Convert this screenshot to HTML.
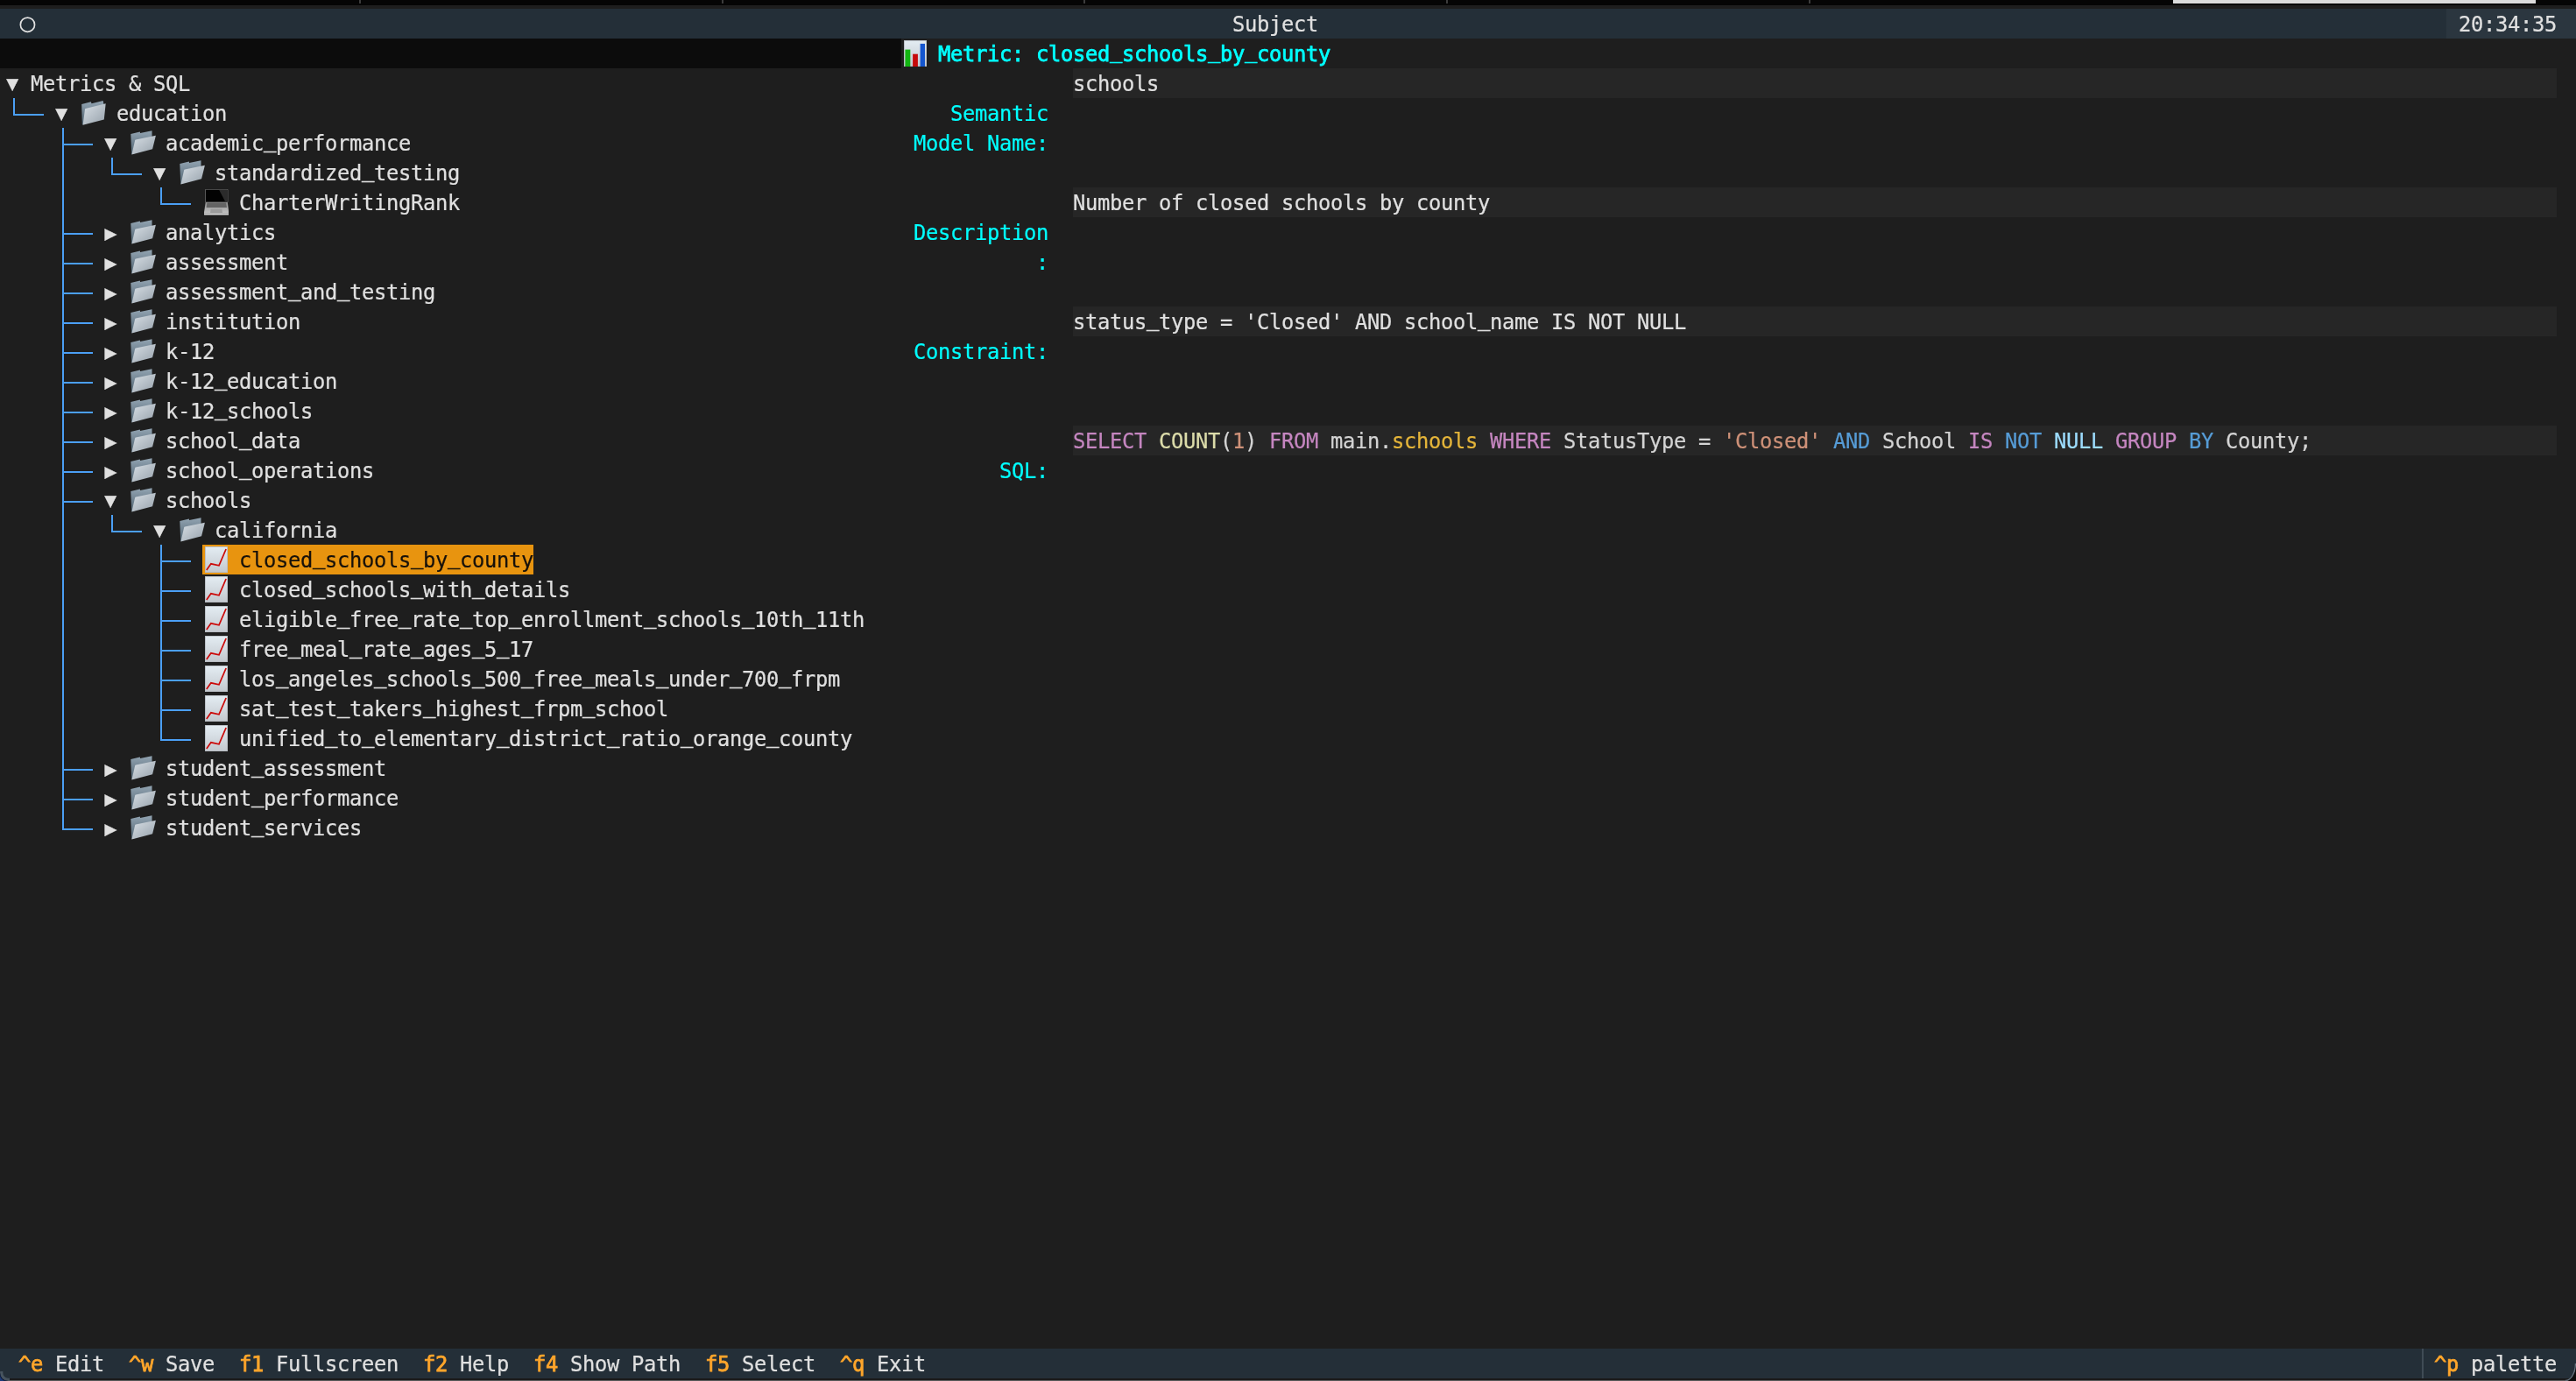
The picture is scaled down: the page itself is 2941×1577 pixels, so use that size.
<!DOCTYPE html>
<html lang="en"><head><meta charset="utf-8"><title>Subject</title>
<style>
html,body{margin:0;padding:0;background:#1e1e1e;}
body{width:2941px;height:1577px;overflow:hidden;position:relative;
font-family:"DejaVu Sans Mono","Liberation Mono",monospace;font-size:24.5px;color:#e0e0e0;}
#s{position:absolute;left:0;top:0;width:2941px;height:1577px;overflow:hidden;will-change:transform;}
#s>div,#s>span,#s>svg{position:absolute;}
.t{white-space:pre;line-height:34px;height:34px;letter-spacing:-0.3172px;margin-top:1px;margin-left:0.2px;transform:scaleX(0.97);transform-origin:0 0;-webkit-text-stroke:0.22px currentColor;}
.b{-webkit-text-stroke:0.75px currentColor;}
.a{letter-spacing:0;width:14px;text-align:center;transform:none;margin-left:0.1px;margin-top:0.4px;font-size:23px;}
.right{margin-left:0.4px;margin-top:0.6px;}
.i{display:block;overflow:visible;}
i{font-style:normal;position:relative;top:-4.4px;-webkit-text-stroke:0.55px currentColor;}
</style></head>
<body>
<svg width="0" height="0" style="position:absolute">
<defs>
<linearGradient id="gf" x1="0" y1="0" x2="1" y2="1"><stop offset="0" stop-color="#d9e0e6"/><stop offset="1" stop-color="#96a1ab"/></linearGradient>
<linearGradient id="gb" x1="0" y1="0" x2="0" y2="1"><stop offset="0" stop-color="#93a5b3"/><stop offset="1" stop-color="#4e616f"/></linearGradient>
<linearGradient id="gp" x1="0" y1="0" x2="0" y2="1"><stop offset="0" stop-color="#e4edf3"/><stop offset="1" stop-color="#c3c8ce"/></linearGradient>
<linearGradient id="gl" x1="0" y1="0" x2="0" y2="1"><stop offset="0" stop-color="#8e8e8e"/><stop offset="1" stop-color="#c4c4c4"/></linearGradient>
<symbol id="fopen" viewBox="0 0 30 28">
<path d="M0.3 3.9 L10.8 1.4 L11.1 3 L24.5 0.2 L24.6 20 L1.2 27.2 Z" fill="url(#gb)"/>
<path d="M6 10.6 Q5.3 10.8 5.1 11.6 L1.4 27.5 L25.1 21.2 L28.9 5.8 Z" fill="url(#gf)"/>
</symbol>
<symbol id="fclosed" viewBox="0 0 29 28">
<path d="M0.2 4 L10.9 1.3 L11.5 3.2 L24.7 0.1 L25.4 3.8 L25 20 L1.4 27.4 L0.8 27 Z" fill="url(#gb)"/>
<path d="M4.6 8.9 Q4.1 9 4 9.8 L1.6 27.7 L25.8 21.6 L27.7 3.2 Z" fill="url(#gf)"/>
</symbol>
<symbol id="laptop" viewBox="0 0 28 30">
<path d="M1.5 0.3 L27 0.3 L27 14.9 L1.5 14.9 Z" fill="#020202" stroke="#777" stroke-width="0.7"/>
<path d="M17.2 0.9 L26.5 0.9 L26.5 14 L24.3 14.4 Z" fill="#2b2b2b"/>
<path d="M1.7 14.9 L26.8 14.9 L28.4 27.8 L-0.2 27.8 Z" fill="url(#gl)"/>
<path d="M3.4 15.6 L25.1 15.6 L26 21 L2.6 21 Z" fill="#636363"/>
<path d="M7.6 22.4 L20.4 22.4 L21 27.6 L7 27.6 Z" fill="#9c9c9c"/>
<path d="M-0.2 27.8 L28.4 27.8 L28 29.6 L0.2 29.6 Z" fill="#d8d8d8"/>
</symbol>
<symbol id="chart" viewBox="0 0 26 30">
<rect x="0" y="0" width="26" height="30" fill="url(#gp)"/>
<rect x="0.4" y="0.4" width="25.2" height="29.2" fill="none" stroke="#b4bac0" stroke-width="0.8"/>
<path d="M1.8 26.9 L6.9 19.8 L16 21.8 L24.1 3" fill="none" stroke="#cc0a0a" stroke-width="1.7" stroke-linejoin="miter"/>
</symbol>
<symbol id="bars" viewBox="0 0 26 30">
<rect x="0" y="0" width="26" height="30" fill="url(#gp)"/>
<rect x="0.4" y="0.4" width="25.2" height="29.2" fill="none" stroke="#b4bac0" stroke-width="0.8"/>
<rect x="1.4" y="10.6" width="5.9" height="19.4" fill="#12b512"/>
<rect x="10.1" y="15.7" width="5.8" height="14.3" fill="#c70a0a"/>
<rect x="18.6" y="3.9" width="5.4" height="26.1" fill="#1556cf"/>
</symbol>
</defs>
</svg>
<div id="s">
<div style="left:0px;top:0px;width:2941px;height:6px;background:#050505;"></div>
<div style="left:410px;top:0px;width:2px;height:4px;background:#3c3c3c;"></div>
<div style="left:824px;top:0px;width:2px;height:4px;background:#3c3c3c;"></div>
<div style="left:1237px;top:0px;width:2px;height:4px;background:#3c3c3c;"></div>
<div style="left:1651px;top:0px;width:2px;height:4px;background:#3c3c3c;"></div>
<div style="left:2065px;top:0px;width:2px;height:4px;background:#3c3c3c;"></div>
<div style="left:2481px;top:0px;width:414px;height:4px;background:#dcdcdc;"></div>
<div style="left:0px;top:6px;width:2941px;height:4px;background:#1e1e1e;"></div>
<div style="left:0px;top:10px;width:2941px;height:34px;background:#242f38;"></div>
<div style="left:2793px;top:10px;width:148px;height:34px;background:#2b363f;"></div>
<div style="left:0px;top:44px;width:1029px;height:34px;background:#0c0c0c;"></div>
<div style="left:0px;top:1540px;width:2941px;height:34px;background:#242f38;"></div>
<div style="left:0px;top:1574px;width:2941px;height:3px;background:#1b1b1b;"></div>
<div style="left:0px;top:1576px;width:2941px;height:1px;background:#5a5a5a;"></div>
<svg class="i" style="left:20px;top:16px" width="24" height="24" viewBox="0 0 24 24"><circle cx="11.45" cy="12.2" r="8.1" fill="none" stroke="#e0e0e0" stroke-width="1.7"/></svg>
<span class="t" style="left:1407px;top:10px;">Subject</span>
<span class="t" style="left:2807px;top:10px;">20:34:35</span>
<svg class="i" style="left:1032px;top:46px" width="26" height="30" viewBox="0 0 26 30"><use href="#bars"/></svg>
<span class="t b" style="left:1071px;top:44px;color:#00ffff;">Metric: closed<i>_</i>schools<i>_</i>by<i>_</i>county</span>
<div style="left:1225px;top:78px;width:1694px;height:34px;background:#262626;"></div>
<span class="t" style="left:1225px;top:78px;">schools</span>
<span class="t" style="left:1085px;top:112px;color:#00ffff;">Semantic</span>
<span class="t" style="left:1043px;top:146px;color:#00ffff;">Model Name:</span>
<div style="left:1225px;top:214px;width:1694px;height:34px;background:#262626;"></div>
<span class="t" style="left:1225px;top:214px;">Number of closed schools by county</span>
<span class="t" style="left:1043px;top:248px;color:#00ffff;">Description</span>
<span class="t" style="left:1183px;top:282px;color:#00ffff;">:</span>
<div style="left:1225px;top:350px;width:1694px;height:34px;background:#262626;"></div>
<span class="t" style="left:1225px;top:350px;">status<i>_</i>type = &#x27;Closed&#x27; AND school<i>_</i>name IS NOT NULL</span>
<span class="t" style="left:1043px;top:384px;color:#00ffff;">Constraint:</span>
<div style="left:1225px;top:486px;width:1694px;height:34px;background:#262626;"></div>
<span class="t" style="left:1225px;top:486px;color:#c586c0;">SELECT</span>
<span class="t" style="left:1323px;top:486px;color:#dcdcaa;">COUNT</span>
<span class="t" style="left:1393px;top:486px;color:#d4d4d4;">(</span>
<span class="t" style="left:1407px;top:486px;color:#ce9178;">1</span>
<span class="t" style="left:1421px;top:486px;color:#d4d4d4;">)</span>
<span class="t" style="left:1449px;top:486px;color:#c586c0;">FROM</span>
<span class="t" style="left:1519px;top:486px;color:#d4d4d4;">main.</span>
<span class="t" style="left:1589px;top:486px;color:#e5b53a;">schools</span>
<span class="t" style="left:1701px;top:486px;color:#c586c0;">WHERE</span>
<span class="t" style="left:1785px;top:486px;color:#d4d4d4;">StatusType =</span>
<span class="t" style="left:1967px;top:486px;color:#ce9178;">&#x27;Closed&#x27;</span>
<span class="t" style="left:2093px;top:486px;color:#569cd6;">AND</span>
<span class="t" style="left:2149px;top:486px;color:#d4d4d4;">School</span>
<span class="t" style="left:2247px;top:486px;color:#c586c0;">IS</span>
<span class="t" style="left:2289px;top:486px;color:#569cd6;">NOT</span>
<span class="t" style="left:2345px;top:486px;color:#9cdcfe;">NULL</span>
<span class="t" style="left:2415px;top:486px;color:#c586c0;">GROUP</span>
<span class="t" style="left:2499px;top:486px;color:#569cd6;">BY</span>
<span class="t" style="left:2541px;top:486px;color:#d4d4d4;">County;</span>
<span class="t" style="left:1141px;top:520px;color:#00ffff;">SQL:</span>
<span class="t a down" style="left:7px;top:78px">▼</span>
<span class="t" style="left:35px;top:78px;">Metrics &amp; SQL</span>
<div style="left:15px;top:112px;width:2px;height:20px;background:#4b9ff5;"></div>
<div style="left:15px;top:130px;width:35px;height:2px;background:#4b9ff5;"></div>
<span class="t a down" style="left:63px;top:112px">▼</span>
<svg class="i" style="left:93px;top:115px" width="29" height="28" viewBox="0 0 29 28"><use href="#fclosed"/></svg>
<span class="t" style="left:133px;top:112px;">education</span>
<div style="left:71px;top:146px;width:2px;height:34px;background:#4b9ff5;"></div>
<div style="left:71px;top:164px;width:35px;height:2px;background:#4b9ff5;"></div>
<span class="t a down" style="left:119px;top:146px">▼</span>
<svg class="i" style="left:149px;top:149px" width="30" height="28" viewBox="0 0 30 28"><use href="#fopen"/></svg>
<span class="t" style="left:189px;top:146px;">academic<i>_</i>performance</span>
<div style="left:71px;top:180px;width:2px;height:34px;background:#4b9ff5;"></div>
<div style="left:127px;top:180px;width:2px;height:20px;background:#4b9ff5;"></div>
<div style="left:127px;top:198px;width:35px;height:2px;background:#4b9ff5;"></div>
<span class="t a down" style="left:175px;top:180px">▼</span>
<svg class="i" style="left:205px;top:183px" width="30" height="28" viewBox="0 0 30 28"><use href="#fopen"/></svg>
<span class="t" style="left:245px;top:180px;">standardized<i>_</i>testing</span>
<div style="left:71px;top:214px;width:2px;height:34px;background:#4b9ff5;"></div>
<div style="left:183px;top:214px;width:2px;height:20px;background:#4b9ff5;"></div>
<div style="left:183px;top:232px;width:35px;height:2px;background:#4b9ff5;"></div>
<svg class="i" style="left:233px;top:216px" width="28" height="30" viewBox="0 0 28 30"><use href="#laptop"/></svg>
<span class="t" style="left:273px;top:214px;">CharterWritingRank</span>
<div style="left:71px;top:248px;width:2px;height:34px;background:#4b9ff5;"></div>
<div style="left:71px;top:266px;width:35px;height:2px;background:#4b9ff5;"></div>
<span class="t a right" style="left:119px;top:248px">▶</span>
<svg class="i" style="left:149px;top:251px" width="30" height="28" viewBox="0 0 30 28"><use href="#fopen"/></svg>
<span class="t" style="left:189px;top:248px;">analytics</span>
<div style="left:71px;top:282px;width:2px;height:34px;background:#4b9ff5;"></div>
<div style="left:71px;top:300px;width:35px;height:2px;background:#4b9ff5;"></div>
<span class="t a right" style="left:119px;top:282px">▶</span>
<svg class="i" style="left:149px;top:285px" width="30" height="28" viewBox="0 0 30 28"><use href="#fopen"/></svg>
<span class="t" style="left:189px;top:282px;">assessment</span>
<div style="left:71px;top:316px;width:2px;height:34px;background:#4b9ff5;"></div>
<div style="left:71px;top:334px;width:35px;height:2px;background:#4b9ff5;"></div>
<span class="t a right" style="left:119px;top:316px">▶</span>
<svg class="i" style="left:149px;top:319px" width="30" height="28" viewBox="0 0 30 28"><use href="#fopen"/></svg>
<span class="t" style="left:189px;top:316px;">assessment<i>_</i>and<i>_</i>testing</span>
<div style="left:71px;top:350px;width:2px;height:34px;background:#4b9ff5;"></div>
<div style="left:71px;top:368px;width:35px;height:2px;background:#4b9ff5;"></div>
<span class="t a right" style="left:119px;top:350px">▶</span>
<svg class="i" style="left:149px;top:353px" width="30" height="28" viewBox="0 0 30 28"><use href="#fopen"/></svg>
<span class="t" style="left:189px;top:350px;">institution</span>
<div style="left:71px;top:384px;width:2px;height:34px;background:#4b9ff5;"></div>
<div style="left:71px;top:402px;width:35px;height:2px;background:#4b9ff5;"></div>
<span class="t a right" style="left:119px;top:384px">▶</span>
<svg class="i" style="left:149px;top:387px" width="30" height="28" viewBox="0 0 30 28"><use href="#fopen"/></svg>
<span class="t" style="left:189px;top:384px;">k-12</span>
<div style="left:71px;top:418px;width:2px;height:34px;background:#4b9ff5;"></div>
<div style="left:71px;top:436px;width:35px;height:2px;background:#4b9ff5;"></div>
<span class="t a right" style="left:119px;top:418px">▶</span>
<svg class="i" style="left:149px;top:421px" width="30" height="28" viewBox="0 0 30 28"><use href="#fopen"/></svg>
<span class="t" style="left:189px;top:418px;">k-12<i>_</i>education</span>
<div style="left:71px;top:452px;width:2px;height:34px;background:#4b9ff5;"></div>
<div style="left:71px;top:470px;width:35px;height:2px;background:#4b9ff5;"></div>
<span class="t a right" style="left:119px;top:452px">▶</span>
<svg class="i" style="left:149px;top:455px" width="30" height="28" viewBox="0 0 30 28"><use href="#fopen"/></svg>
<span class="t" style="left:189px;top:452px;">k-12<i>_</i>schools</span>
<div style="left:71px;top:486px;width:2px;height:34px;background:#4b9ff5;"></div>
<div style="left:71px;top:504px;width:35px;height:2px;background:#4b9ff5;"></div>
<span class="t a right" style="left:119px;top:486px">▶</span>
<svg class="i" style="left:149px;top:489px" width="30" height="28" viewBox="0 0 30 28"><use href="#fopen"/></svg>
<span class="t" style="left:189px;top:486px;">school<i>_</i>data</span>
<div style="left:71px;top:520px;width:2px;height:34px;background:#4b9ff5;"></div>
<div style="left:71px;top:538px;width:35px;height:2px;background:#4b9ff5;"></div>
<span class="t a right" style="left:119px;top:520px">▶</span>
<svg class="i" style="left:149px;top:523px" width="30" height="28" viewBox="0 0 30 28"><use href="#fopen"/></svg>
<span class="t" style="left:189px;top:520px;">school<i>_</i>operations</span>
<div style="left:71px;top:554px;width:2px;height:34px;background:#4b9ff5;"></div>
<div style="left:71px;top:572px;width:35px;height:2px;background:#4b9ff5;"></div>
<span class="t a down" style="left:119px;top:554px">▼</span>
<svg class="i" style="left:149px;top:557px" width="30" height="28" viewBox="0 0 30 28"><use href="#fopen"/></svg>
<span class="t" style="left:189px;top:554px;">schools</span>
<div style="left:71px;top:588px;width:2px;height:34px;background:#4b9ff5;"></div>
<div style="left:127px;top:588px;width:2px;height:20px;background:#4b9ff5;"></div>
<div style="left:127px;top:606px;width:35px;height:2px;background:#4b9ff5;"></div>
<span class="t a down" style="left:175px;top:588px">▼</span>
<svg class="i" style="left:205px;top:591px" width="30" height="28" viewBox="0 0 30 28"><use href="#fopen"/></svg>
<span class="t" style="left:245px;top:588px;">california</span>
<div style="left:71px;top:622px;width:2px;height:34px;background:#4b9ff5;"></div>
<div style="left:183px;top:622px;width:2px;height:34px;background:#4b9ff5;"></div>
<div style="left:183px;top:640px;width:35px;height:2px;background:#4b9ff5;"></div>
<div style="left:231px;top:622px;width:378px;height:34px;background:#e8940f;"></div>
<svg class="i" style="left:234px;top:624px" width="26" height="30" viewBox="0 0 26 30"><use href="#chart"/></svg>
<span class="t" style="left:273px;top:622px;color:#17110a;">closed<i>_</i>schools<i>_</i>by<i>_</i>county</span>
<div style="left:71px;top:656px;width:2px;height:34px;background:#4b9ff5;"></div>
<div style="left:183px;top:656px;width:2px;height:34px;background:#4b9ff5;"></div>
<div style="left:183px;top:674px;width:35px;height:2px;background:#4b9ff5;"></div>
<svg class="i" style="left:234px;top:658px" width="26" height="30" viewBox="0 0 26 30"><use href="#chart"/></svg>
<span class="t" style="left:273px;top:656px;">closed<i>_</i>schools<i>_</i>with<i>_</i>details</span>
<div style="left:71px;top:690px;width:2px;height:34px;background:#4b9ff5;"></div>
<div style="left:183px;top:690px;width:2px;height:34px;background:#4b9ff5;"></div>
<div style="left:183px;top:708px;width:35px;height:2px;background:#4b9ff5;"></div>
<svg class="i" style="left:234px;top:692px" width="26" height="30" viewBox="0 0 26 30"><use href="#chart"/></svg>
<span class="t" style="left:273px;top:690px;">eligible<i>_</i>free<i>_</i>rate<i>_</i>top<i>_</i>enrollment<i>_</i>schools<i>_</i>10th<i>_</i>11th</span>
<div style="left:71px;top:724px;width:2px;height:34px;background:#4b9ff5;"></div>
<div style="left:183px;top:724px;width:2px;height:34px;background:#4b9ff5;"></div>
<div style="left:183px;top:742px;width:35px;height:2px;background:#4b9ff5;"></div>
<svg class="i" style="left:234px;top:726px" width="26" height="30" viewBox="0 0 26 30"><use href="#chart"/></svg>
<span class="t" style="left:273px;top:724px;">free<i>_</i>meal<i>_</i>rate<i>_</i>ages<i>_</i>5<i>_</i>17</span>
<div style="left:71px;top:758px;width:2px;height:34px;background:#4b9ff5;"></div>
<div style="left:183px;top:758px;width:2px;height:34px;background:#4b9ff5;"></div>
<div style="left:183px;top:776px;width:35px;height:2px;background:#4b9ff5;"></div>
<svg class="i" style="left:234px;top:760px" width="26" height="30" viewBox="0 0 26 30"><use href="#chart"/></svg>
<span class="t" style="left:273px;top:758px;">los<i>_</i>angeles<i>_</i>schools<i>_</i>500<i>_</i>free<i>_</i>meals<i>_</i>under<i>_</i>700<i>_</i>frpm</span>
<div style="left:71px;top:792px;width:2px;height:34px;background:#4b9ff5;"></div>
<div style="left:183px;top:792px;width:2px;height:34px;background:#4b9ff5;"></div>
<div style="left:183px;top:810px;width:35px;height:2px;background:#4b9ff5;"></div>
<svg class="i" style="left:234px;top:794px" width="26" height="30" viewBox="0 0 26 30"><use href="#chart"/></svg>
<span class="t" style="left:273px;top:792px;">sat<i>_</i>test<i>_</i>takers<i>_</i>highest<i>_</i>frpm<i>_</i>school</span>
<div style="left:71px;top:826px;width:2px;height:34px;background:#4b9ff5;"></div>
<div style="left:183px;top:826px;width:2px;height:20px;background:#4b9ff5;"></div>
<div style="left:183px;top:844px;width:35px;height:2px;background:#4b9ff5;"></div>
<svg class="i" style="left:234px;top:828px" width="26" height="30" viewBox="0 0 26 30"><use href="#chart"/></svg>
<span class="t" style="left:273px;top:826px;">unified<i>_</i>to<i>_</i>elementary<i>_</i>district<i>_</i>ratio<i>_</i>orange<i>_</i>county</span>
<div style="left:71px;top:860px;width:2px;height:34px;background:#4b9ff5;"></div>
<div style="left:71px;top:878px;width:35px;height:2px;background:#4b9ff5;"></div>
<span class="t a right" style="left:119px;top:860px">▶</span>
<svg class="i" style="left:149px;top:863px" width="30" height="28" viewBox="0 0 30 28"><use href="#fopen"/></svg>
<span class="t" style="left:189px;top:860px;">student<i>_</i>assessment</span>
<div style="left:71px;top:894px;width:2px;height:34px;background:#4b9ff5;"></div>
<div style="left:71px;top:912px;width:35px;height:2px;background:#4b9ff5;"></div>
<span class="t a right" style="left:119px;top:894px">▶</span>
<svg class="i" style="left:149px;top:897px" width="30" height="28" viewBox="0 0 30 28"><use href="#fopen"/></svg>
<span class="t" style="left:189px;top:894px;">student<i>_</i>performance</span>
<div style="left:71px;top:928px;width:2px;height:20px;background:#4b9ff5;"></div>
<div style="left:71px;top:946px;width:35px;height:2px;background:#4b9ff5;"></div>
<span class="t a right" style="left:119px;top:928px">▶</span>
<svg class="i" style="left:149px;top:931px" width="30" height="28" viewBox="0 0 30 28"><use href="#fopen"/></svg>
<span class="t" style="left:189px;top:928px;">student<i>_</i>services</span>
<span class="t b" style="left:21px;top:1540px;color:#ffa62b;">^e</span>
<span class="t" style="left:63px;top:1540px;">Edit</span>
<span class="t b" style="left:147px;top:1540px;color:#ffa62b;">^w</span>
<span class="t" style="left:189px;top:1540px;">Save</span>
<span class="t b" style="left:273px;top:1540px;color:#ffa62b;">f1</span>
<span class="t" style="left:315px;top:1540px;">Fullscreen</span>
<span class="t b" style="left:483px;top:1540px;color:#ffa62b;">f2</span>
<span class="t" style="left:525px;top:1540px;">Help</span>
<span class="t b" style="left:609px;top:1540px;color:#ffa62b;">f4</span>
<span class="t" style="left:651px;top:1540px;">Show Path</span>
<span class="t b" style="left:805px;top:1540px;color:#ffa62b;">f5</span>
<span class="t" style="left:847px;top:1540px;">Select</span>
<span class="t b" style="left:959px;top:1540px;color:#ffa62b;">^q</span>
<span class="t" style="left:1001px;top:1540px;">Exit</span>
<div style="left:2765px;top:1540px;width:2px;height:34px;background:#3f4b55;"></div>
<span class="t b" style="left:2779px;top:1540px;color:#ffa62b;">^p</span>
<span class="t" style="left:2821px;top:1540px;">palette</span>
<svg class="i" style="left:0;top:1566px" width="11" height="11" viewBox="0 0 11 11"><path d="M0 2 A9 9 0 0 0 9 11 L0 11 Z" fill="#1c3a78"/><path d="M1.75 0 L1.75 2 A7.25 7.25 0 0 0 9 9.25 L11 9.25" fill="none" stroke="#4e5a66" stroke-width="3.2" opacity="0.85"/><path d="M-0.4 2 A9.4 9.4 0 0 0 9 11.4" fill="none" stroke="#0a1226" stroke-width="0.9"/></svg>
<svg class="i" style="left:2929px;top:1557px" width="12" height="20" viewBox="0 0 12 20"><path d="M12 0 A12 20 0 0 1 0 20 L12 20 Z" fill="#0c0c0c"/><path d="M11.4 0 A11.4 19.4 0 0 1 0 19.4" fill="none" stroke="#66727e" stroke-width="1.3"/></svg>
</div></body></html>
